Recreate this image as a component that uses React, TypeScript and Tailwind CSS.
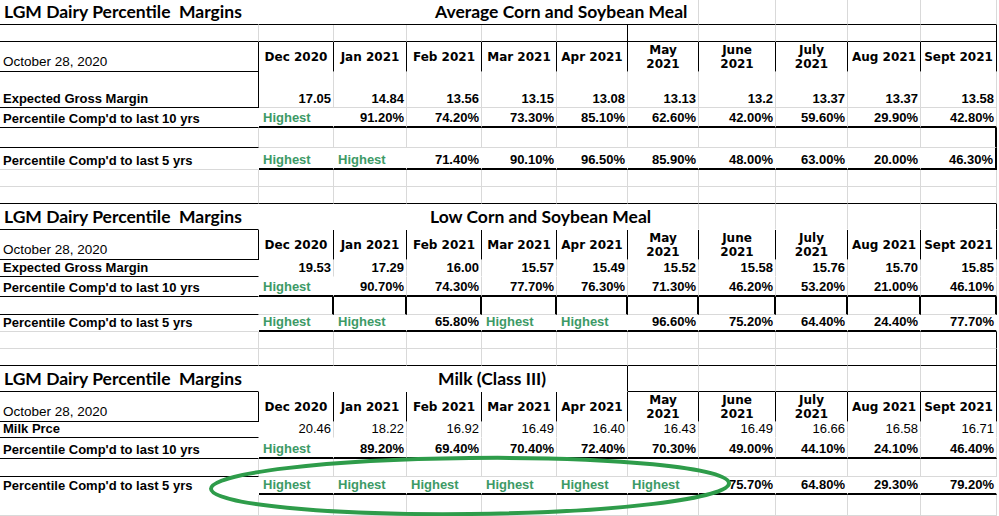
import React from 'react';
import clsx from 'clsx';

type B = 'g' | 'd' | 't' | 'n';

const bottom: Record<B, string> = {
  g: 'border-b border-b-[#d9d9d9]',
  d: 'border-b border-b-black',
  t: 'border-b-2 border-b-black',
  n: 'border-b border-b-transparent',
};

const right: Record<B, string> = {
  g: 'border-r border-r-[#d9d9d9]',
  d: 'border-r border-r-black',
  t: 'border-r-2 border-r-black',
  n: 'border-r border-r-transparent',
};

const MONTHS = ['Dec 2020', 'Jan 2021', 'Feb 2021', 'Mar 2021', 'Apr 2021', 'May|2021', 'June|2021', 'July|2021', 'Aug 2021', 'Sept 2021'];

const title = "font-['Lato',sans-serif] font-bold text-[17.5px] leading-[20px]";
const verdana = "font-['DejaVu_Sans',Verdana,sans-serif] font-bold text-[12px] leading-[14px]";

function Cell({ b = 'g', r = 'g', className, children }: { b?: B; r?: B; className?: string; children?: React.ReactNode }) {
  return <div className={clsx('flex min-w-0 whitespace-nowrap overflow-visible', bottom[b], right[r], className)}>{children}</div>;
}

// one spreadsheet row: label cell + ten month cells, borders given as 11-char strings
const row = (key: string, label: React.ReactNode, vals: string[], bs: string, rs: string, valCls = 'font-bold', labelCls = 'font-bold') => [
  <Cell key={key + 'a'} b={bs[0] as B} r={rs[0] as B} className={clsx('items-end pl-[3px] pb-[1px]', labelCls)}>
    {label}
  </Cell>,
  ...MONTHS.map((_, i) => {
    const v = vals[i] ?? '';
    const hi = v === 'Highest';
    return (
      <Cell
        key={key + i}
        b={bs[i + 1] as B}
        r={rs[i + 1] as B}
        className={hi ? 'items-end pl-[4px] pb-[1px] font-bold text-[#3d9a66]' : clsx('items-end justify-end pr-[2px] pb-[1px]', valCls)}
      >
        {v}
      </Cell>
    );
  }),
];

const header = (key: string) => [
  <Cell key={key + 'a'} b="d" r="d" className="items-end pl-[3px] pb-[2px] text-[13.5px]">
    October 28, 2020
  </Cell>,
  ...MONTHS.map((m, i) => (
    <Cell key={key + i} b="n" r="d" className={clsx('items-center justify-center text-center', verdana)}>
      <span className="flex flex-col">
        {m.split('|').map((l) => (
          <span key={l}>{l}</span>
        ))}
      </span>
    </Cell>
  )),
];

const blank = (key: string, bs: string, rs: string) => row(key, '', [], bs, rs);

export default function App() {
  const cells = [
    // ---- Average Corn and Soybean Meal
    <Cell key="t1a" b="d" r="n" className={clsx('items-end pl-[4px] pb-[2px]', title)}>LGM Dairy Percentile&nbsp; Margins</Cell>,
    <Cell key="t1b" b="d" r="g" className={clsx('col-span-6 items-end pl-[176px] pb-[2px]', title)}>Average Corn and Soybean Meal</Cell>,
    ...['d', 'd', 'd', 'd'].map((_, i) => <Cell key={'t1c' + i} b="d" r="g" />),
    ...blank('s1r2', 'ddddddddddd', 'gggggdggggd'),
    ...header('s1h'),
    ...row('s1r4', 'Expected Gross Margin', ['17.05', '14.84', '13.56', '13.15', '13.08', '13.13', '13.2', '13.37', '13.37', '13.58'], 'dgggggggggg', 'dgggggggggg'),
    ...row('s1r5', "Percentile Comp'd to last 10 yrs", ['Highest', '91.20%', '74.20%', '73.30%', '85.10%', '62.60%', '42.00%', '59.60%', '29.90%', '42.80%'], 'dtttttttttt', 'nnggggggggg'),
    ...blank('s1r6', 'dgggggggggg', 'ggggggggggt'),
    ...row('s1r7', "Percentile Comp'd to last 5 yrs", ['Highest', 'Highest', '71.40%', '90.10%', '96.50%', '85.90%', '48.00%', '63.00%', '20.00%', '46.30%'], 'gtttttttttt', 'nnnnnnnnnnt'),
    ...blank('s1r8', 'ggggggggggg', 'ggggggggggg'),
    ...blank('s1r9', 'ddddddddddd', 'ggggggggggg'),

    // ---- Low Corn and Soybean Meal
    <Cell key="t2a" b="d" r="n" className={clsx('items-end pl-[4px] pb-[2px]', title)}>LGM Dairy Percentile&nbsp; Margins</Cell>,
    <Cell key="t2b" b="n" r="g" className={clsx('col-span-6 items-end pl-[171px] pb-[2px]', title)}>Low Corn and Soybean Meal</Cell>,
    ...['g', 'g', 'g', 'd'].map((r, i) => <Cell key={'t2c' + i} b="n" r={r as B} />),
    ...header('s2h'),
    ...row('s2r3', 'Expected Gross Margin', ['19.53', '17.29', '16.00', '15.57', '15.49', '15.52', '15.58', '15.76', '15.70', '15.85'], 'dnnnnnnnnnn', 'ngggggggggg'),
    ...row('s2r4', "Percentile Comp'd to last 10 yrs", ['Highest', '90.70%', '74.30%', '77.70%', '76.30%', '71.30%', '46.20%', '53.20%', '21.00%', '46.10%'], 'dtttttttttt', 'nnggggggggg'),
    ...blank('s2r5', 'dgggggggggg', 'ntttttttttt'),
    ...row('s2r6', "Percentile Comp'd to last 5 yrs", ['Highest', 'Highest', '65.80%', 'Highest', 'Highest', '96.60%', '75.20%', '64.40%', '24.40%', '77.70%'], 'gtttttttttt', 'nnnnnnnnnnn'),
    ...blank('s2r7', 'ggggggggggg', 'ggggggggggd'),
    ...blank('s2r8', 'ddddddddddd', 'ggggggggggd'),

    // ---- Milk (Class III)
    <Cell key="t3a" b="d" r="n" className={clsx('items-end pl-[4px] pb-[2px]', title)}>LGM Dairy Percentile&nbsp; Margins</Cell>,
    <Cell key="t3b" b="n" r="d" className={clsx('col-span-5 items-end pl-[179px] pb-[2px]', title)}>Milk (Class III)</Cell>,
    ...['g', 'g', 'g', 'g', 'd'].map((r, i) => <Cell key={'t3c' + i} b="d" r={r as B} />),
    ...header('s3h'),
    ...row('s3r3', 'Milk Prce', ['20.46', '18.22', '16.92', '16.49', '16.40', '16.43', '16.49', '16.66', '16.58', '16.71'], 'dnnnnnnnnnn', 'ngggggggggg', 'font-normal'),
    ...row('s3r4', "Percentile Comp'd to last 10 yrs", ['Highest', '89.20%', '69.40%', '70.40%', '72.40%', '70.30%', '49.00%', '44.10%', '24.10%', '46.40%'], 'dtttttttttt', 'nnggggggggg'),
    ...blank('s3r5', 'dgggggggggg', 'ggggggggggg'),
    ...row('s3r6', "Percentile Comp'd to last 5 yrs", ['Highest', 'Highest', 'Highest', 'Highest', 'Highest', 'Highest', '75.70%', '64.80%', '29.30%', '79.20%'], 'ntttttttttt', 'nnnnnnnnnnn'),
    ...blank('s3r7', 'ggggggggggg', 'ggggggggggg'),
  ];

  return (
    <div className="relative w-[999px] h-[516px] overflow-hidden bg-white text-black">
      <div className="grid grid-cols-[259px_75px_73px_75px_75px_71px_71px_77px_72px_73px_76px] grid-rows-[25px_17px_30px_36px_20px_20px_22px_17px_17px_26px_30px_17px_20px_18px_17px_17px_17px_26px_30px_16px_21px_18px_18px_21px] font-['Liberation_Sans',Arial,sans-serif] text-[13px] leading-[15px]">
        {cells}
      </div>
      {/* hand-drawn highlight round the "Highest" run */}
      <svg className="pointer-events-none absolute left-0 top-0" width="999" height="516" viewBox="0 0 999 516">
        <ellipse cx="470" cy="486" rx="259" ry="28" fill="none" stroke="#2e9c4a" strokeWidth="4" transform="rotate(-0.6 470 486)" />
      </svg>
    </div>
  );
}
